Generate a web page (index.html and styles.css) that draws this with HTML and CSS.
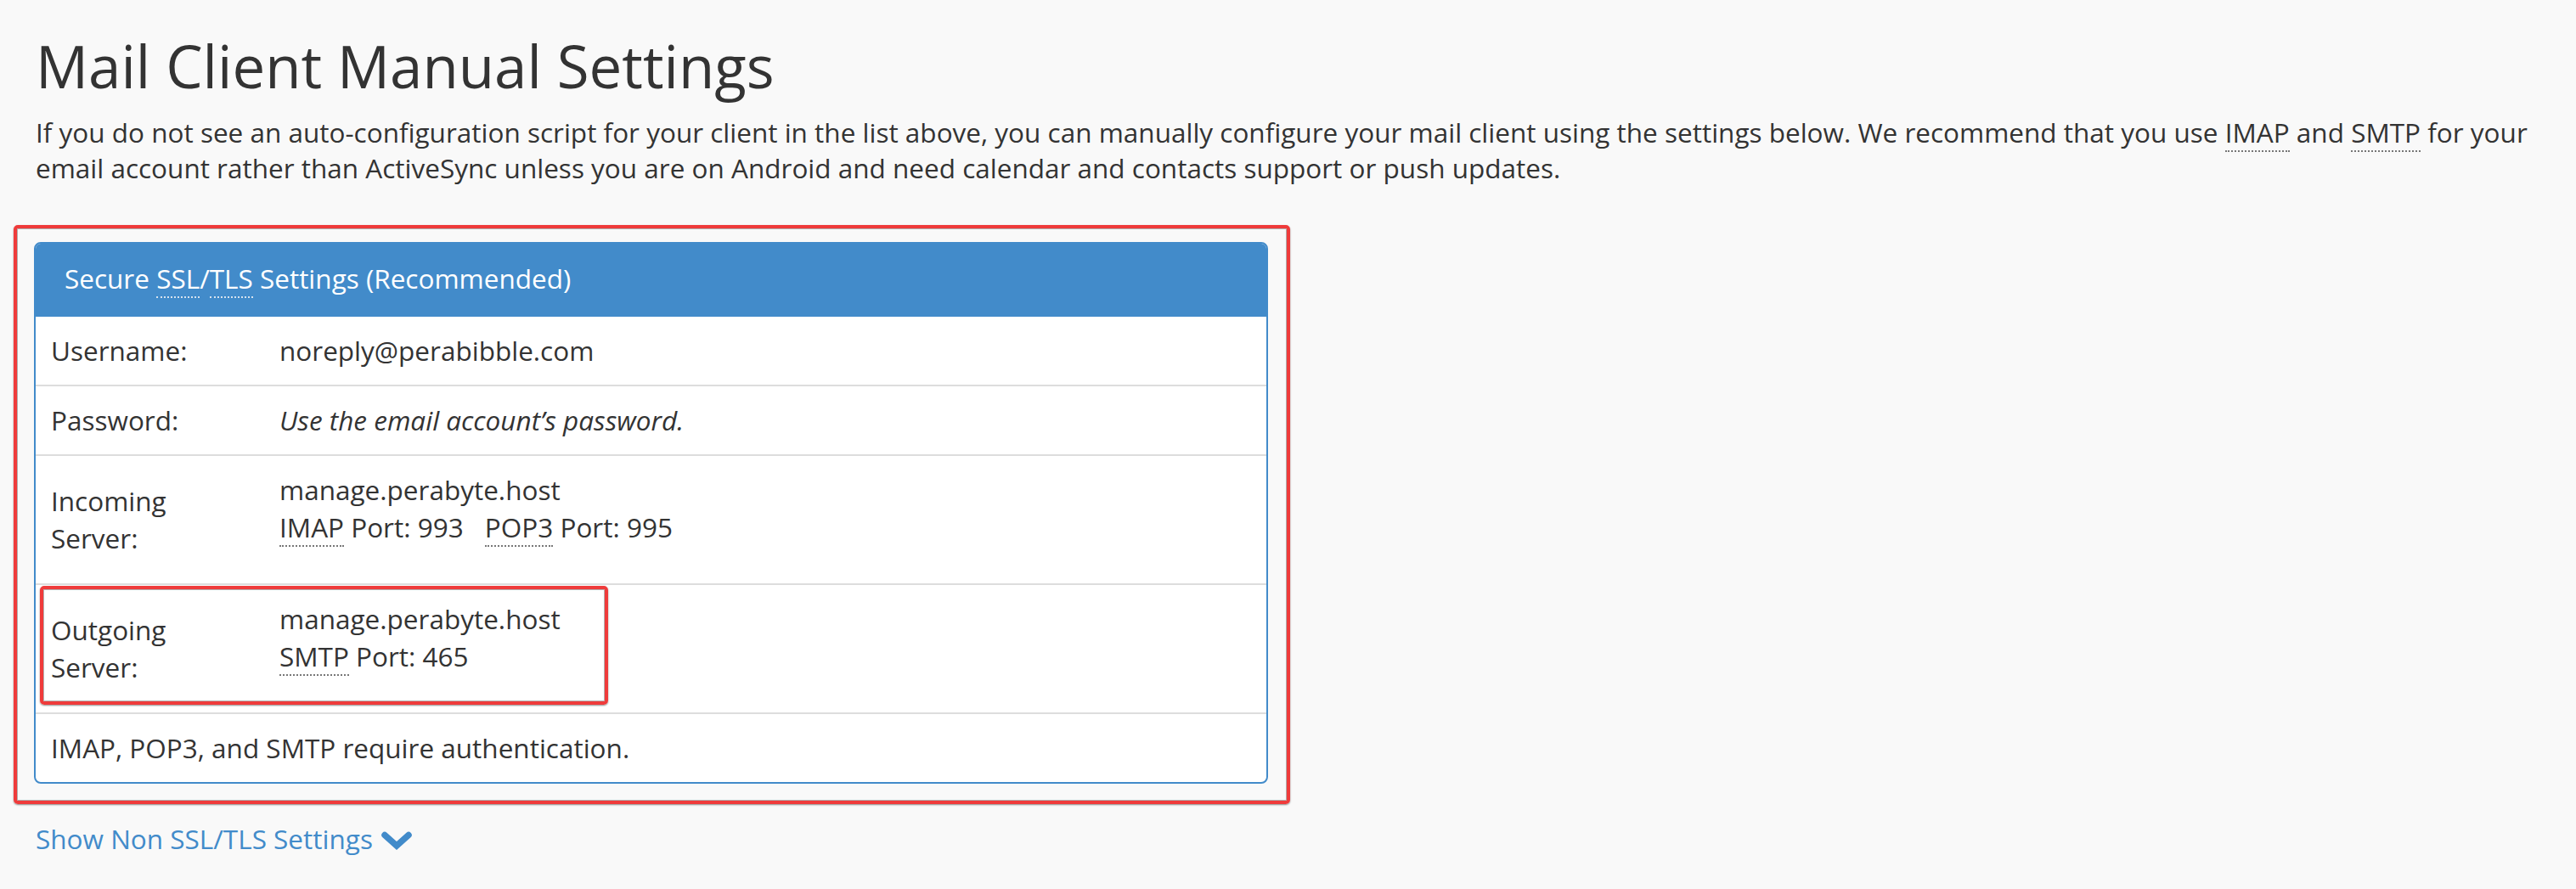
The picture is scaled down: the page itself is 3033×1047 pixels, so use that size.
FILE: index.html
```html
<!DOCTYPE html>
<html lang="en">
<head>
<meta charset="utf-8">
<title>Mail Client Manual Settings</title>
<link rel="stylesheet" href="styles.css">
</head>
<body>
<main class="page">
  <h1 class="title">Mail Client Manual Settings</h1>
  <p class="intro">If you do not see an auto-configuration script for your client in the list above, you can manually configure your mail client using the settings below. We recommend that you use <abbr title="Internet Message Access Protocol">IMAP</abbr> and <abbr title="Simple Mail Transfer Protocol">SMTP</abbr> for your email account rather than ActiveSync unless you are on Android and need calendar and contacts support or push updates.</p>

  <div class="highlight">
    <section class="panel">
      <div class="panel-heading">Secure <abbr class="abbr-light" title="Secure Sockets Layer">SSL</abbr>/<abbr class="abbr-light" title="Transport Layer Security">TLS</abbr> Settings (Recommended)</div>
      <div class="row">
        <div class="label">Username:</div>
        <div class="value">noreply@perabibble.com</div>
      </div>
      <div class="row">
        <div class="label">Password:</div>
        <div class="value"><em>Use the email account’s password.</em></div>
      </div>
      <div class="row">
        <div class="label">Incoming Server:</div>
        <div class="value value-tall">
          <div>manage.perabyte.host</div>
          <div><abbr title="Internet Message Access Protocol">IMAP</abbr> Port: 993 <span class="port-gap"><abbr title="Post Office Protocol 3">POP3</abbr> Port: 995</span></div>
        </div>
      </div>
      <div class="row row-marked">
        <div class="label">Outgoing Server:</div>
        <div class="value value-tall">
          <div>manage.perabyte.host</div>
          <div><abbr title="Simple Mail Transfer Protocol">SMTP</abbr> Port: 465</div>
        </div>
        <div class="mark"></div>
      </div>
      <div class="row row-last">
        <div class="full">IMAP, POP3, and SMTP require authentication.</div>
      </div>
    </section>
  </div>

  <a class="toggle" href="#">Show Non SSL/TLS Settings <svg class="chevron" width="36" height="22" viewBox="0 0 36 22" aria-hidden="true"><path d="M4 4.5 L18 17 L32 4.5" fill="none" stroke="#428bca" stroke-width="7.5" stroke-linecap="round" stroke-linejoin="miter"/></svg></a>
</main>
</body>
</html>
```

FILE: styles.css
```css
html, body {
  margin: 0;
  padding: 0;
  background: #f9f9f9;
}

body {
  font-family: "Open Sans", "Liberation Sans", Arial, sans-serif;
  font-size: 31.5px;
  line-height: 44px;
  color: #333333;
}

.page {
  padding: 0 42px 40px 42px;
}

.title {
  margin: 37px 0 0 0;
  font-size: 69px;
  font-weight: 400;
  line-height: 80px;
  color: #333333;
}

.intro {
  margin: 18px 0 0 0;
  line-height: 42px;
}

abbr[title] {
  text-decoration: none;
  border-bottom: 2px dotted #777777;
  cursor: help;
}

.abbr-light[title] {
  border-bottom-color: #d6e2ee;
}

.highlight {
  margin: 46px 0 0 -26px;
  width: 1453px;
  padding: 16px 22px 20px 20px;
  border: 4px solid #ef3b3b;
  border-radius: 5px;
  box-shadow: 0 1px 2px rgba(0, 0, 0, 0.45), inset 0 0 0 1px rgba(0, 0, 0, 0.3);
}

.panel {
  background: #ffffff;
  border: 2px solid #428bca;
  border-radius: 8px;
  overflow: hidden;
}

.panel-heading {
  background: #428bca;
  color: #ffffff;
  margin: -2px -2px 0 -2px;
  padding: 21px 34px 23px 36px;
}

.row {
  position: relative;
  display: grid;
  grid-template-columns: 269px 1fr;
  align-items: center;
  border-bottom: 2px solid #dddddd;
}

.row-last {
  border-bottom: 0;
  display: block;
}

.label,
.value,
.full {
  padding: 18px;
}

.value-tall {
  padding-bottom: 44px;
}

.port-gap {
  margin-left: 17px;
}

.mark {
  position: absolute;
  left: 5px;
  top: 1px;
  width: 661px;
  height: 132px;
  border: 4px solid #ef3b3b;
  border-radius: 5px;
  box-shadow: 0 1px 2px rgba(0, 0, 0, 0.45), inset 0 0 0 1px rgba(0, 0, 0, 0.3);
  pointer-events: none;
}

.toggle {
  display: inline-block;
  margin-top: 19px;
  color: #428bca;
  text-decoration: none;
}

.chevron {
  vertical-align: -1px;
  margin-left: 2px;
}
```
